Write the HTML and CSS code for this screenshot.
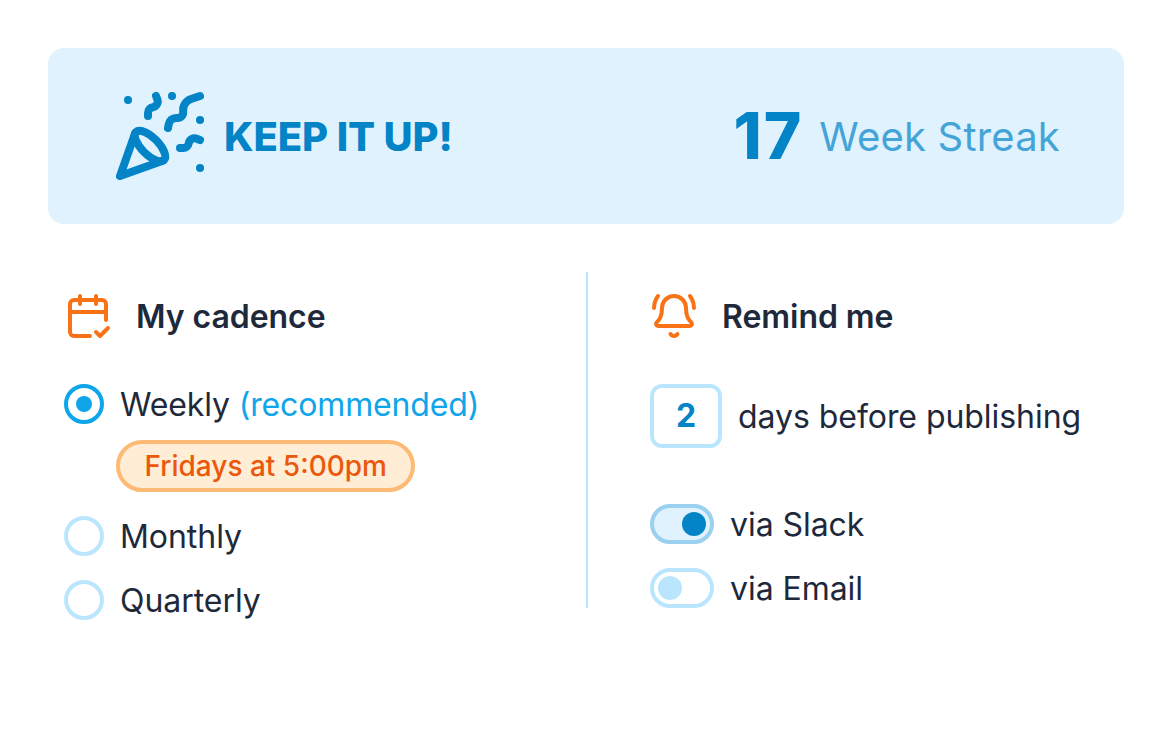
FILE: index.html
```html
<!DOCTYPE html>
<html lang="en">
<head>
  <meta charset="UTF-8">
  <meta name="viewport" content="width=device-width, initial-scale=1.0">
  <title>Publishing cadence</title>
  <link rel="stylesheet" href="styles.css">
</head>
<body>

  <section class="banner">
    <div class="cheer">
      <svg class="icon icon-party" viewBox="0 0 24 24">
        <path d="M5.8 11.3 2 22l10.7-3.79"/>
        <path d="M4 3h.01M22 8h.01M15 2h.01M22 20h.01"/>
        <path d="m22 2-2.24.75a2.9 2.9 0 0 0-1.96 3.12c.1.86-.57 1.63-1.45 1.63h-.38c-.86 0-1.6.6-1.76 1.44L14 10"/>
        <path d="m22 13-.82-.33c-.86-.34-1.82.2-1.98 1.11c-.11.7-.72 1.22-1.43 1.22H17"/>
        <path d="m11 2 .33.82c.34.86-.2 1.82-1.11 1.98C9.52 4.9 9 5.52 9 6.23V7"/>
        <path d="M11 13c1.93 1.93 2.83 4.17 2 5-.83.83-3.07-.07-5-2-1.93-1.93-2.83-4.17-2-5 .83-.83 3.07.07 5 2Z"/>
      </svg>
      <span class="cheer-text">KEEP IT UP!</span>
    </div>
    <div class="streak">
      <span class="streak-count">17</span>
      <span class="streak-label">Week Streak</span>
    </div>
  </section>

  <main class="settings">
    <section class="cadence">
      <h2 class="heading">
        <svg class="icon" viewBox="0 0 24 24">
          <path d="M8 2v4M16 2v4M3 10h18"/>
          <path d="M21 14V6a2 2 0 0 0-2-2H5a2 2 0 0 0-2 2v14a2 2 0 0 0 2 2h8"/>
          <path d="m16 20 2 2 4-4"/>
        </svg>
        <span class="title">My cadence</span>
      </h2>
      <div class="option">
        <span class="radio radio-on"></span>
        <span class="label label-tight">Weekly <span class="hint">(recommended)</span></span>
      </div>
      <span class="pill">Fridays at 5:00pm</span>
      <div class="option">
        <span class="radio"></span>
        <span class="label">Monthly</span>
      </div>
      <div class="option">
        <span class="radio"></span>
        <span class="label">Quarterly</span>
      </div>
    </section>

    <section class="reminders">
      <h2 class="heading">
        <svg class="icon" viewBox="0 0 24 24">
          <path d="M10.268 21a2 2 0 0 0 3.464 0"/>
          <path d="M22 8c0-2.3-.8-4.3-2-6M4 2C2.8 3.7 2 5.7 2 8"/>
          <path d="M3.262 15.326A1 1 0 0 0 4 17h16a1 1 0 0 0 .74-1.673C19.41 13.956 18 12.499 18 8A6 6 0 0 0 6 8c0 4.499-1.411 5.956-2.738 7.326"/>
        </svg>
        <span class="title">Remind me</span>
      </h2>
      <div class="days">
        <span class="days-count">2</span>
        <span class="label">days before publishing</span>
      </div>
      <div class="channel">
        <span class="toggle toggle-on"></span>
        <span class="label">via Slack</span>
      </div>
      <div class="channel">
        <span class="toggle"></span>
        <span class="label">via Email</span>
      </div>
    </section>
  </main>

</body>
</html>
```
FILE: styles.css
```css
* { box-sizing: border-box; }
body {
  margin: 0;
  padding: 48px;
  font-family: Inter, sans-serif;
  font-size: 32px;
  line-height: 40px;
  color: #1e293b;
  background: #fff;
}
.icon {
  width: 48px;
  height: 48px;
  flex: none;
  fill: none;
  stroke: #f97316;
  stroke-width: 2;
  stroke-linecap: round;
  stroke-linejoin: round;
}
.banner {
  display: flex;
  align-items: center;
  justify-content: space-between;
  height: 176px;
  padding: 0 64px;
  border-radius: 16px;
  background: #e0f2fe;
  color: #0284c7;
}
.cheer { display: flex; align-items: center; gap: 16px; }
.icon-party { width: 96px; height: 96px; stroke: #0284c7; }
.cheer-text { padding-top: 2px; font-size: 40px; font-weight: 800; letter-spacing: -0.0025em; }
.streak { display: flex; align-items: center; gap: 16px; }
.streak-count { font-size: 64px; font-weight: 800; letter-spacing: 0.03em; }
.streak-label { padding-top: 2px; font-size: 40px; letter-spacing: 0.005em; opacity: 0.7; }

.settings {
  display: grid;
  grid-template-columns: 1fr 1fr;
  align-items: start;
  margin-top: 48px;
}
.cadence {
  display: flex;
  flex-direction: column;
  align-items: flex-start;
  padding: 20px 16px 0;
}
.reminders {
  display: flex;
  flex-direction: column;
  padding: 20px 0 0 62px;
  border-left: 2px solid #bae6fd;
}
.heading {
  display: flex;
  align-items: center;
  gap: 24px;
  margin: 0 0 44px;
  font-size: 32px;
  font-weight: 600;
}
.title, .label { padding-top: 2px; line-height: 38px; letter-spacing: -0.0015em; }
.label-tight { letter-spacing: -0.0045em; }
.option { display: flex; align-items: center; gap: 16px; }
.option + .option { margin-top: 24px; }
.radio {
  display: grid;
  place-items: center;
  width: 40px;
  height: 40px;
  border: 4px solid #bae6fd;
  border-radius: 50%;
}
.radio-on { border-color: #0ea5e9; }
.radio-on::after {
  content: "";
  width: 16px;
  height: 16px;
  border-radius: 50%;
  background: #0ea5e9;
}
.hint { color: #0ea5e9; }
.pill {
  height: 52px;
  margin: 16px 0 24px 52px;
  padding: 0 24.5px;
  border: 4px solid #fdba74;
  border-radius: 26px;
  background: #ffedd5;
  color: #ea580c;
  font-size: 28px;
  font-weight: 500;
  line-height: 44px;
}
.days {
  display: flex;
  align-items: center;
  gap: 16px;
  margin-bottom: 56px;
}
.days-count {
  width: 72px;
  height: 64px;
  border: 4px solid #bae6fd;
  border-radius: 12px;
  color: #0284c7;
  font-weight: 700;
  line-height: 56px;
  text-align: center;
}
.channel { display: flex; align-items: center; gap: 16px; }
.channel + .channel { margin-top: 24px; }
.toggle {
  display: flex;
  align-items: center;
  width: 64px;
  height: 40px;
  padding: 0 4px;
  border: 4px solid #bae6fd;
  border-radius: 20px;
}
.toggle::after {
  content: "";
  width: 24px;
  height: 24px;
  border-radius: 50%;
  background: #bae6fd;
}
.toggle-on {
  justify-content: flex-end;
  border-color: #9bd0ee;
  background: #e0f2fe;
}
.toggle-on::after { background: #0284c7; }
```
